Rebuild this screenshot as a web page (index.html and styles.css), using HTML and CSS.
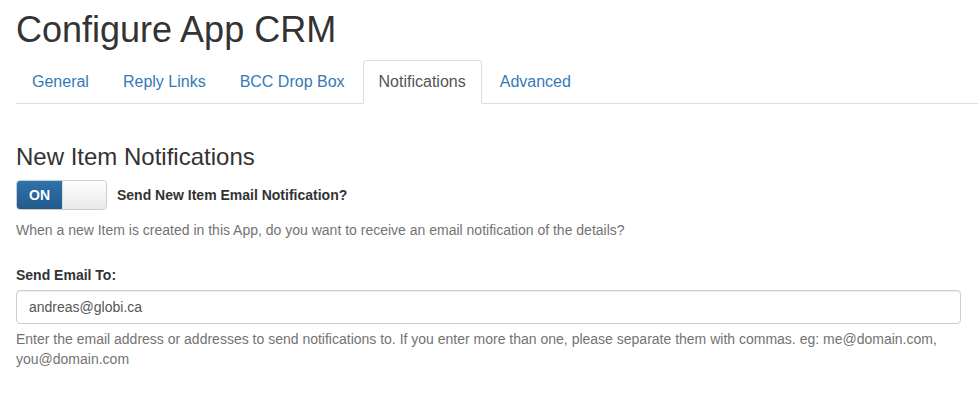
FILE: index.html
```html
<!DOCTYPE html>
<html lang="en">
<head>
    <meta charset="UTF-8">
    <meta name="viewport" content="width=device-width, initial-scale=1.0">
    <title>Configure App CRM</title>
    <link rel="stylesheet" href="styles.css">
</head>
<body>

    <div class="page">
        <h1 class="title">Configure App CRM</h1>

        <ul class="tabs">
            <li><a href="#">General</a></li>
            <li><a href="#">Reply Links</a></li>
            <li><a href="#">BCC Drop Box</a></li>
            <li class="active"><a href="#">Notifications</a></li>
            <li><a href="#">Advanced</a></li>
        </ul>

        <div class="tab-content">
            <h3 class="section-title">New Item Notifications</h3>

            <div class="switch-row">
                <div class="switch">
                    <span class="switch-on">ON</span>
                    <span class="switch-off"></span>
                </div>
                <label class="switch-label">Send New Item Email Notification?</label>
            </div>
            <p class="help">When a new Item is created in this App, do you want to receive an email notification of the details?</p>

            <div class="form-group">
                <label class="field-label" for="email-to">Send Email To:</label>
                <input type="text" class="form-control" id="email-to" value="andreas@globi.ca">
                <p class="help help-tight">Enter the email address or addresses to send notifications to. If you enter more than one, please separate them with commas. eg: me@domain.com, you@domain.com</p>
            </div>
        </div>
    </div>

</body>
</html>
```

FILE: styles.css
```css
* { margin: 0; padding: 0; box-sizing: border-box; }
body {
    font-family: "Liberation Sans", Arial, sans-serif;
    font-size: 14px; line-height: 20px; color: #333;
    background: #fff;
}
.page { padding-left: 16px; }

.title {
    font-size: 36px; font-weight: 500; line-height: 1.1;
    margin: 10px 0 10px;
}

/* tabs */
.tabs {
    display: flex; list-style: none;
    border-bottom: 1px solid #ddd;
}
.tabs li { margin-bottom: -1px; }
.tabs a {
    display: block; padding: 10px 15px; margin-right: 2px;
    font-size: 16px; line-height: 22px;
    color: #337ab7; text-decoration: none;
    border: 1px solid transparent; border-radius: 4px 4px 0 0;
}
.tabs .active a {
    color: #555; background: #fff;
    border-color: #ddd #ddd transparent;
}

.tab-content { padding: 40px 17px 0 0; }
.section-title {
    font-size: 24px; font-weight: 500; line-height: 1.1;
    margin-bottom: 10px;
}

/* on/off switch */
.switch-row { display: flex; align-items: center; gap: 10px; }
.switch {
    display: flex; width: 91px; height: 30px;
    border: 1px solid #ccc; border-radius: 4px; overflow: hidden;
}
.switch-on {
    width: 45px; display: flex; align-items: center; justify-content: center;
    background: linear-gradient(to bottom, #2f72ad, #225a8c);
    color: #fff; font-weight: bold; font-size: 14px;
}
.switch-off {
    flex: 1;
    background: linear-gradient(to bottom, #fff, #e8e8e8);
    border-left: 1px solid #ddd;
}
.switch-label { font-weight: bold; }

.help { color: #737373; margin: 10px 0 25px; }
.help-tight { margin: 5px 0 10px; }

.field-label { display: inline-block; font-weight: bold; margin-bottom: 5px; }
.form-control {
    display: block; width: 100%; height: 34px; padding: 6px 12px;
    font-family: inherit; font-size: 14px; line-height: 20px; color: #555;
    border: 1px solid #ccc; border-radius: 4px;
    box-shadow: inset 0 1px 1px rgba(0, 0, 0, 0.075);
    outline: none;
}
```
